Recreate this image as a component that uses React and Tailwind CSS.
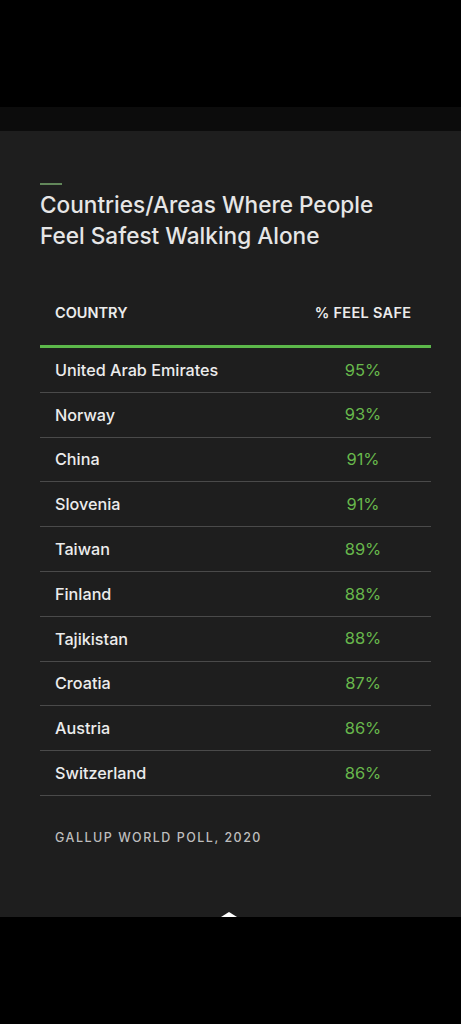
import React from 'react';

const ROWS = [
  ['United Arab Emirates', '95%'],
  ['Norway', '93%'],
  ['China', '91%'],
  ['Slovenia', '91%'],
  ['Taiwan', '89%'],
  ['Finland', '88%'],
  ['Tajikistan', '88%'],
  ['Croatia', '87%'],
  ['Austria', '86%'],
  ['Switzerland', '86%'],
];

export default function App() {
  return (
    <div className="min-h-[1024px] bg-black flex flex-col" style={{ fontFamily: 'Inter, "Liberation Sans", sans-serif' }}>
      <div className="h-[107px] bg-black" />
      <div className="h-[24px] bg-[#0c0c0c]" />
      <div className="relative h-[786px] bg-[#1e1e1e] pl-[40px] pr-[30px] pt-[52px]">
        <div className="w-[22px] h-[2px] bg-[#62875a]" />
        <h1 className="mt-[4px] text-[22.6px] leading-[31px] font-medium text-[#e6e6e6]">
          Countries/Areas Where People<br />Feel Safest Walking Alone
        </h1>
        <div className="mt-[45px]">
          <div className="flex items-start h-[52px] pt-[7px] pl-[15px] border-b-[3px] border-[#5cb84a]">
            <div className="flex-1 text-[14.5px] leading-[20px] font-semibold text-[#ececec]">COUNTRY</div>
            <div className="w-[136px] text-center text-[14.5px] leading-[20px] font-semibold tracking-[0.3px] text-[#ececec]">% FEEL SAFE</div>
          </div>
          {ROWS.map(([name, pct]) => (
            <div key={name} className="flex items-center h-[44.8px] pl-[15px] border-b border-[#4a4a4a]">
              <div className="flex-1 text-[16.2px] font-medium text-[#ececec]">{name}</div>
              <div className="w-[136px] text-center text-[16.5px] text-[#68b84c]">{pct}</div>
            </div>
          ))}
        </div>
        <div className="mt-[32px] pl-[15px] text-[12.5px] leading-[20px] tracking-[1.5px] text-[#bdbdbd] font-medium">GALLUP WORLD POLL, 2020</div>
        <div className="absolute bottom-0 left-[221px] w-0 h-0 border-l-[8px] border-r-[8px] border-b-[5px] border-l-transparent border-r-transparent border-b-white" />
      </div>
      <div className="flex-1 bg-black" />
    </div>
  );
}
